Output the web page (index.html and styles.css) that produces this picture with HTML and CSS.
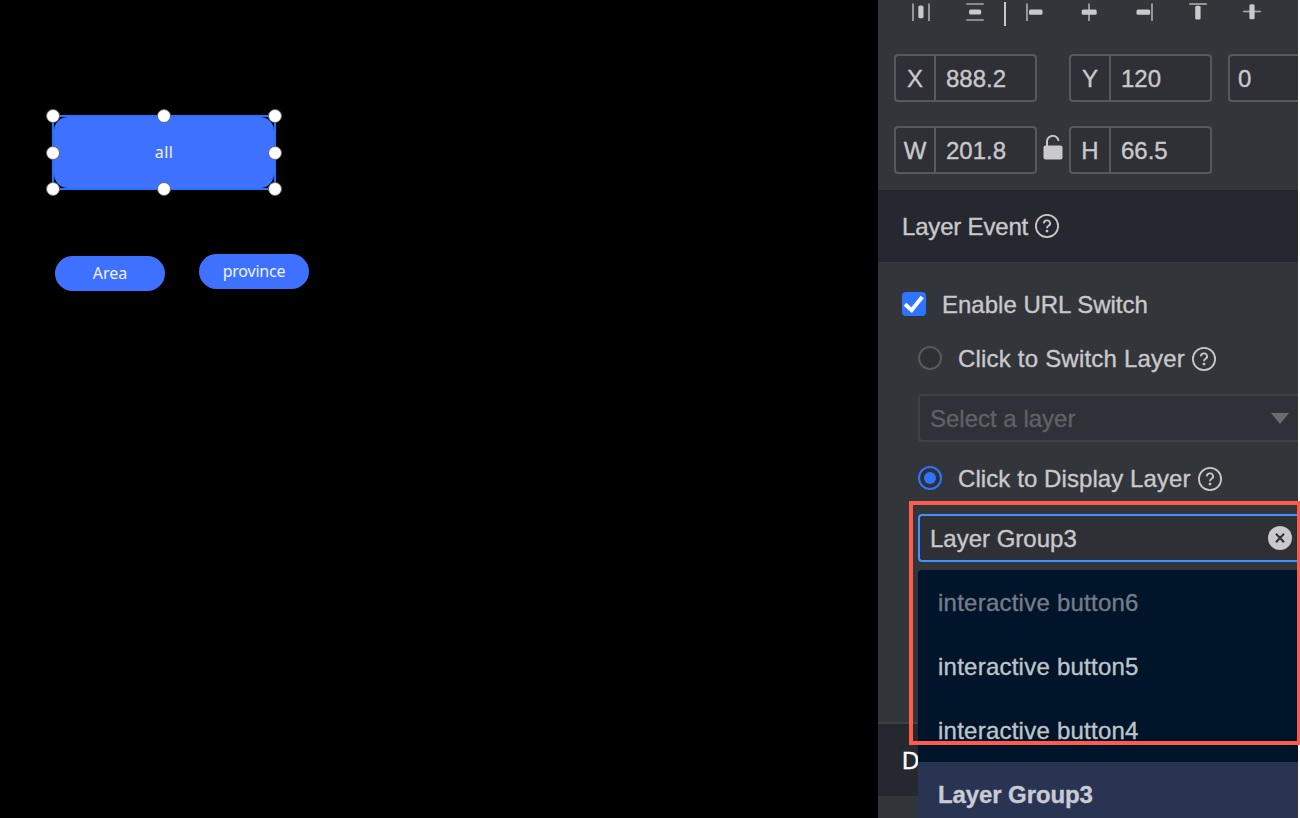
FILE: index.html
```html
<!DOCTYPE html>
<html lang="en">
<head>
  <meta charset="UTF-8" />
  <meta name="viewport" content="width=device-width, initial-scale=1.0"/>
  <title>Layer Editor</title>
  <link rel="stylesheet" href="styles.css">
</head>
<body>

  <div class="editor">
    <main class="canvas">
      <div class="node node-all selected">
        <div class="shape"><span>all</span></div>
        <i class="handle top left"></i>
        <i class="handle top center"></i>
        <i class="handle top right"></i>
        <i class="handle middle left"></i>
        <i class="handle middle right"></i>
        <i class="handle bottom left"></i>
        <i class="handle bottom center"></i>
        <i class="handle bottom right"></i>
      </div>
      <div class="node pill node-area"><span>Area</span></div>
      <div class="node pill node-province"><span>province</span></div>
    </main>

    <aside class="panel">
      <div class="toolbar">
        <svg viewBox="0 0 24 24"><path d="M4 3.5v17.5M20 3.5v17.5"/><rect x="9.3" y="5.5" width="5.2" height="12.8" rx="1.5"/></svg>
        <svg viewBox="0 0 24 24"><path d="M3.2 4h17.6M3.2 20h17.6"/><rect x="6" y="9.4" width="12.2" height="5.2" rx="1.5"/></svg>
        <span class="divider"></span>
        <svg viewBox="0 0 24 24"><path d="M4 3.5v17.5"/><rect x="6" y="9.4" width="13.5" height="5.4" rx="1.5"/></svg>
        <svg viewBox="0 0 24 24"><path d="M12 3.5v17.5"/><rect x="4.7" y="9.4" width="15" height="5.4" rx="1.5"/></svg>
        <svg viewBox="0 0 24 24"><path d="M21 3.5v17.5"/><rect x="5.5" y="9.4" width="13.7" height="5.4" rx="1.5"/></svg>
        <svg viewBox="0 0 24 24"><path d="M4.2 4h17.6"/><rect x="10.2" y="5.8" width="5.4" height="13.6" rx="1.5"/></svg>
        <svg viewBox="0 0 24 24"><path d="M4.2 11.5h17.6"/><rect x="10.4" y="4.3" width="5.2" height="15" rx="1.5"/></svg>
      </div>

      <div class="row">
        <label class="field"><b>X</b><span>888.2</span></label>
        <span class="spacer"></span>
        <label class="field"><b>Y</b><span>120</span></label>
        <label class="field angle"><span>0</span></label>
      </div>
      <div class="row">
        <label class="field"><b>W</b><span>201.8</span></label>
        <span class="spacer">
          <svg class="lock" viewBox="0 0 20 26"><rect x="0.5" y="10.5" width="19" height="14" rx="2"/><path d="M4 11V7.5a5.8 5.8 0 0 1 11.6-1.6"/></svg>
        </span>
        <label class="field"><b>H</b><span>66.5</span></label>
      </div>

      <div class="section">
        <span class="t-event">Layer Event</span>
        <svg class="help" viewBox="0 0 24 24"><circle cx="12" cy="12" r="11.1"/><path d="M8.9 9.4a3.1 2.9 0 1 1 4.7 2.4q-1.6.9-1.6 2.4"/><circle class="dot" cx="12" cy="17.1" r="1.4"/></svg>
      </div>

      <div class="events">
        <div class="option check">
          <span class="checkbox"><svg viewBox="0 0 24 24"><path d="M3 12.2l6.6 6L20.2 5"/></svg></span>
          <span class="t-enable">Enable URL Switch</span>
        </div>
        <div class="option">
          <span class="radio"></span>
          <span class="t-switch">Click to Switch Layer</span>
          <svg class="help" viewBox="0 0 24 24"><circle cx="12" cy="12" r="11.1"/><path d="M8.9 9.4a3.1 2.9 0 1 1 4.7 2.4q-1.6.9-1.6 2.4"/><circle class="dot" cx="12" cy="17.1" r="1.4"/></svg>
        </div>
        <div class="select disabled">
          <span>Select a layer</span>
          <i class="arrow"></i>
        </div>
        <div class="option">
          <span class="radio on"></span>
          <span class="t-display">Click to Display Layer</span>
          <svg class="help" viewBox="0 0 24 24"><circle cx="12" cy="12" r="11.1"/><path d="M8.9 9.4a3.1 2.9 0 1 1 4.7 2.4q-1.6.9-1.6 2.4"/><circle class="dot" cx="12" cy="17.1" r="1.4"/></svg>
        </div>
        <div class="select open">
          <span>Layer Group3</span>
          <svg class="clear" viewBox="0 0 24 24"><circle cx="12" cy="12" r="12"/><path d="M8 7.7l8 8.6M16 7.7l-8 8.6"/></svg>
          <ul class="dropdown">
            <li class="muted">interactive button6</li>
            <li>interactive button5</li>
            <li>interactive button4</li>
            <li class="active">Layer Group3</li>
          </ul>
        </div>
      </div>

      <div class="section data"><span>D</span></div>
    </aside>
    <div class="highlight"></div>
  </div>

</body>
</html>
```

FILE: styles.css
```css
* {
  box-sizing: border-box;
}

body {
  margin: 0;
  height: 818px;
  overflow: hidden;
  background: #fff;
  font-family: "Liberation Sans", Arial, sans-serif;
  font-size: 24px;
  color: #c9c9cb;
}

.editor {
  position: relative;
  display: flex;
  width: 1300px;
  height: 818px;
}

/* canvas */
.canvas {
  position: relative;
  width: 878px;
  background: #000;
  font-family: "Noto Sans", sans-serif;
  font-size: 16px;
  color: #eef3ff;
}

.node {
  position: absolute;
}

.node-all {
  left: 52px;
  top: 115px;
  width: 224px;
  height: 75px;
  border: 2px solid #2673ff;
}

.shape {
  display: flex;
  align-items: center;
  justify-content: center;
  height: 100%;
  padding-bottom: 1px;
  border-radius: 14px;
  background: #3e71ff;
}

.shape span {
  letter-spacing: 0.4px;
}

.pill {
  display: flex;
  align-items: center;
  justify-content: center;
  width: 110px;
  height: 35px;
  padding-bottom: 2px;
  border-radius: 18px;
  background: #3e71ff;
}

.node-area {
  left: 55px;
  top: 256px;
}

.node-province {
  left: 199px;
  top: 254px;
  letter-spacing: -0.2px;
}

.handle {
  position: absolute;
  width: 14px;
  height: 14px;
  border: 1px solid #666;
  border-radius: 50%;
  background: #fff;
}

.top { top: -8px; }
.middle { top: 29px; }
.bottom { top: 65px; }
.left { left: -8px; }
.center { left: 103px; }
.right { left: 214px; }

/* side panel */
.panel {
  display: flex;
  flex-direction: column;
  width: 420px;
  height: 818px;
  overflow: hidden;
  background: #323539;
  -webkit-text-stroke: 0.35px;
}

.toolbar {
  display: flex;
  flex: none;
  gap: 30px;
  height: 54px;
  padding-left: 31px;
}

.toolbar svg {
  flex: none;
  width: 24px;
  height: 24px;
  fill: #c9c9cb;
  stroke: none;
}

.toolbar path {
  fill: none;
  stroke: #a5a6a8;
  stroke-width: 1.7;
}

.divider {
  flex: none;
  width: 2px;
  height: 24px;
  margin: 2px -13px 0;
  background: #c9c9cb;
}

.row {
  display: flex;
  flex: none;
  height: 48px;
  margin-bottom: 24px;
  padding-left: 16px;
}

.row + .row {
  margin-bottom: 16px;
}

.field {
  display: flex;
  flex: none;
  width: 143px;
  border: 2px solid #58595d;
  border-radius: 4px;
  background: #2f3036;
  line-height: 45px;
}

.field b {
  width: 40px;
  border-right: 2px solid #58595d;
  font-weight: normal;
  text-align: center;
}

.field span {
  padding-left: 10px;
}

.angle {
  margin-left: 16px;
}

.angle span {
  padding-left: 8px;
}

.spacer {
  flex: none;
  width: 32px;
  padding: 9px 0 0 6px;
}

.lock {
  display: block;
  width: 20px;
  height: 26px;
  fill: #c9c9cb;
}

.lock path {
  fill: none;
  stroke: #c9c9cb;
  stroke-width: 2;
}

.section {
  display: flex;
  flex: none;
  align-items: center;
  height: 72px;
  padding-left: 24px;
  background: #262830;
}

.section span,
.option span:not(.checkbox):not(.radio),
.select span {
  padding-top: 2px;
}

.t-event {
  letter-spacing: -0.18px;
}

.t-switch {
  letter-spacing: 0.2px;
}

.t-display {
  letter-spacing: 0.08px;
}

.help {
  flex: none;
  width: 24px;
  height: 24px;
  margin-left: 7px;
  fill: none;
  stroke: #c9c9cb;
  stroke-width: 1.8;
}

.option .help {
  margin-top: 2px;
}

.help .dot {
  fill: #c9c9cb;
  stroke: none;
}

.events {
  flex: none;
  height: 460px;
  padding: 20px 0 0 40px;
}

.option {
  display: flex;
  align-items: center;
  height: 48px;
  margin-bottom: 12px;
}

.check {
  height: 44px;
  margin: 0 0 8px -16px;
}

.checkbox {
  width: 24px;
  height: 24px;
  margin-right: 16px;
  border-radius: 4px;
  background: #2f74ff;
}

.checkbox svg {
  display: block;
  fill: none;
  stroke: #fff;
  stroke-width: 4;
}

.radio {
  display: flex;
  width: 24px;
  height: 24px;
  margin-right: 16px;
  border: 2px solid #58595d;
  border-radius: 50%;
  background: #2f3036;
}

.radio.on {
  align-items: center;
  justify-content: center;
  border-color: #2f74ff;
}

.radio.on::after {
  content: "";
  width: 12px;
  height: 12px;
  border-radius: 50%;
  background: #2f74ff;
}

.select {
  position: relative;
  display: flex;
  align-items: center;
  justify-content: space-between;
  height: 48px;
  margin-bottom: 12px;
  padding: 0 6px 0 10px;
  border: 2px solid #3e4146;
  border-right: none;
  border-radius: 4px 0 0 4px;
  background: #2f3038;
}

.disabled {
  color: #606166;
}

.arrow {
  margin-right: 3px;
  border: 9px solid transparent;
  border-top: 11px solid #6b6c70;
  border-bottom: none;
}

.open {
  border-color: #4391ff;
  background: #2f3036;
}

.clear {
  width: 24px;
  height: 24px;
  fill: #c9c9cb;
}

.clear path {
  stroke: #2f3036;
  stroke-width: 2;
}

.dropdown {
  position: absolute;
  top: 54px;
  left: -2px;
  right: 0;
  margin: 0;
  padding: 0;
  list-style: none;
  border-radius: 4px 0 0 0;
  background: #001529;
  color: #bfc4c9;
}

.dropdown li {
  height: 64px;
  padding-left: 20px;
  line-height: 65px;
  letter-spacing: 0.24px;
}

.dropdown .muted {
  color: #777b89;
}

.dropdown .active {
  background: #283452;
  color: #c9cad4;
  font-weight: bold;
  letter-spacing: -0.1px;
}

.data {
  height: 74px;
  border-top: 2px solid #3e4042;
  color: #fff;
}

/* red frame round the open select */
.highlight {
  position: absolute;
  left: 909px;
  top: 501px;
  width: 392px;
  height: 244px;
  border: 4px solid #ff5a4c;
}
```
